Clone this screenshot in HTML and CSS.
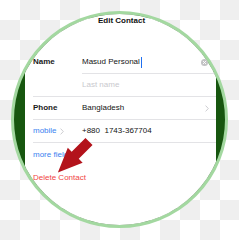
FILE: index.html
```html
<!DOCTYPE html>
<html>
<head>
<meta charset="utf-8">
<link rel="stylesheet" href="styles.css">
</head>
<body>
<div class="stage">
  <div class="lens">
    <div class="panel">
      <div class="title">Edit Contact</div>
      <div class="group">
        <div class="label">Name</div>
        <div class="fields">
          <div class="field first">
            <span class="value">Masud Personal</span><span class="caret"></span>
            <svg class="clear" width="7" height="7" viewBox="0 0 7 7"><circle cx="3.5" cy="3.5" r="3.5" fill="#c2c2c4"/><path d="M2.2 2.2L4.8 4.8M4.8 2.2L2.2 4.8" stroke="#fff" stroke-width="0.9" stroke-linecap="round"/></svg>
          </div>
          <div class="field">
            <span class="placeholder">Last name</span>
          </div>
        </div>
      </div>
      <div class="row">
        <div class="label">Phone</div>
        <div class="value grow">Bangladesh</div>
        <svg class="chev" width="4" height="7" viewBox="0 0 4 7"><path d="M0.6 0.6L3.3 3.5L0.6 6.4" fill="none" stroke="#c7c7cc" stroke-width="0.9"/></svg>
      </div>
      <div class="row">
        <div class="label link">mobile<svg class="chev-small" width="4" height="7" viewBox="0 0 4 7"><path d="M0.6 0.6L3.3 3.5L0.6 6.4" fill="none" stroke="#c7c7cc" stroke-width="0.9"/></svg></div>
        <div class="value grow">+880&nbsp; 1743-367704</div>
      </div>
      <div class="row plain"><span class="link">more fields</span></div>
      <div class="row plain"><span class="danger">Delete Contact</span></div>
    </div>
  </div>
</div>
<svg class="arrow" width="239" height="240" viewBox="0 0 239 240">
  <polygon points="85.46,137.96 92.54,145.04 78.75,158.83 82.63,162.71 57.89,172.61 67.79,147.87 71.67,151.75" fill="#b3131b"/>
</svg>
</body>
</html>
```
FILE: styles.css
```css
html, body {
  margin: 0;
  padding: 0;
}
body {
  width: 239px;
  height: 240px;
  overflow: hidden;
  background-color: #ffffff;
  background-image: conic-gradient(#efefef 25%, transparent 0 50%, #efefef 0 75%, transparent 0);
  background-size: 40px 40px;
  font-family: "Liberation Sans", Arial, sans-serif;
  font-size: 8px;
  color: #141414;
  position: relative;
}
.stage {
  padding: 11px 0 0 11px;
}
.lens {
  width: 217px;
  height: 217px;
  box-sizing: border-box;
  border: 3px solid #a3d8a0;
  border-radius: 50%;
  overflow: hidden;
  background: #17560f;
  display: flex;
}
.panel {
  margin-left: 11px;
  width: 191px;
  height: 100%;
  background: #ffffff;
}
.title {
  height: 13px;
  line-height: 13px;
  text-align: center;
  font-weight: bold;
  color: #111;
  padding-left: 2px;
}
.group {
  margin-top: 24px;
  margin-left: 8px;
  display: flex;
  border-bottom: 1px solid #e3e3e6;
}
.label {
  width: 49px;
  flex: none;
  height: 22px;
  line-height: 22px;
  font-weight: bold;
  color: #1a1a1a;
  display: flex;
  align-items: center;
}
.label.link {
  font-weight: normal;
  color: #3a82f0;
}
.fields {
  flex: 1;
}
.field {
  height: 22px;
  line-height: 22px;
  display: flex;
  align-items: center;
  padding-right: 8px;
}
.field.first {
  border-bottom: 1px solid #e3e3e6;
}
.caret {
  display: inline-block;
  width: 1.5px;
  height: 11px;
  background: #1f6ff0;
  margin-left: 1px;
}
.clear {
  margin-left: auto;
  display: block;
}
.placeholder {
  color: #c9c9ce;
}
.row {
  margin-left: 8px;
  height: 22px;
  line-height: 22px;
  display: flex;
  align-items: center;
  border-bottom: 1px solid #e3e3e6;
  padding-right: 7px;
}
.row.plain {
  border-bottom: none;
  height: 23px;
  line-height: 23px;
}
.grow {
  flex: 1;
}
.chev {
  display: block;
}
.chev-small {
  display: block;
  margin-left: 3px;
}
.link {
  color: #3a82f0;
}
.danger {
  color: #f0453f;
}
.arrow {
  position: absolute;
  left: 0;
  top: 0;
  pointer-events: none;
}
```
